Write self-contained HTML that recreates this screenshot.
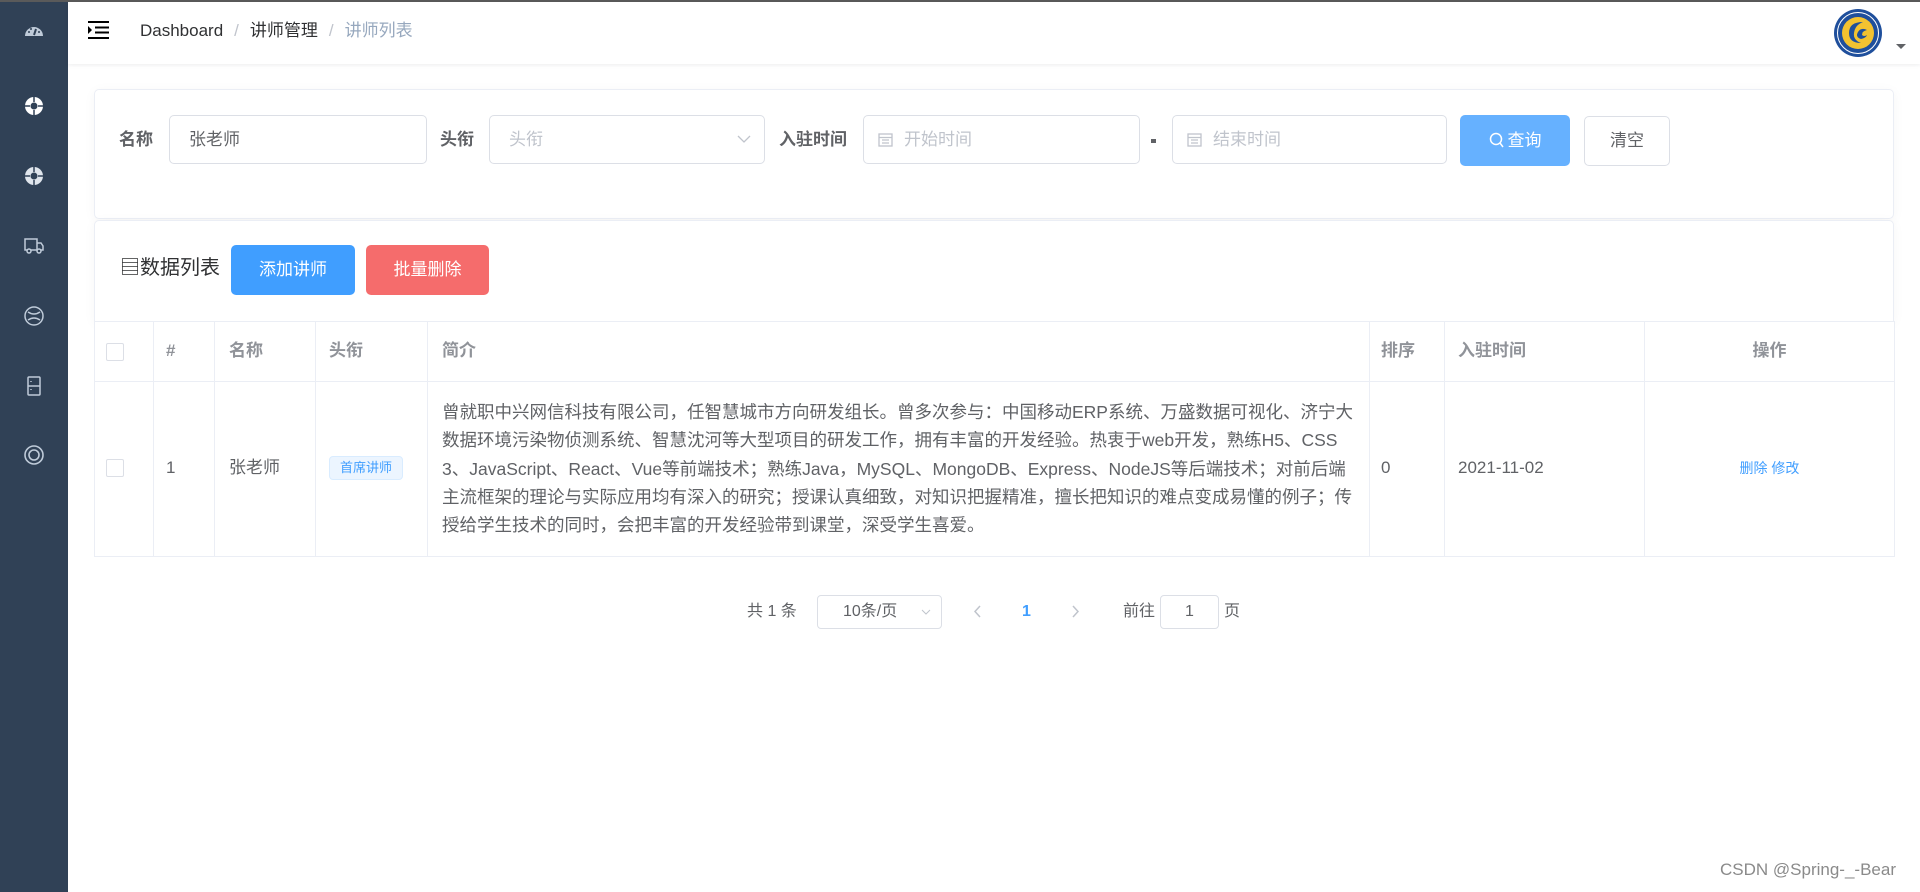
<!DOCTYPE html>
<html><head><meta charset="utf-8"><style>
*{box-sizing:border-box;margin:0;padding:0}
body{width:1920px;height:892px;overflow:hidden;background:#fff;font-family:"Liberation Sans","Noto Sans CJK SC",sans-serif;color:#606266;position:relative}
.abs{position:absolute}
#side{left:0;top:0;width:68px;height:892px;background:#304156}
#topline{left:0;top:0;width:1920px;height:2px;background:#5a5a5a}
#hdr{left:68px;top:2px;width:1852px;height:62px;background:#fff;box-shadow:0 1px 4px rgba(0,21,41,.08)}
.card{border:1px solid #ebeef5;border-radius:5px;background:#fff;box-shadow:0 2px 12px rgba(0,0,0,.04)}
.lbl{font-size:17px;font-weight:bold;color:#606266;line-height:20px}
.inp{border:1px solid #dcdfe6;border-radius:5px;height:49px;font-size:17px;line-height:47px;color:#c0c4cc;background:#fff}
.btn{border-radius:5px;font-size:17px;color:#fff;text-align:center}
.th{font-size:17px;font-weight:bold;color:#909399;line-height:20px}
.vl{top:321px;width:1px;height:235px;background:#ebeef5}
.cb{width:18px;height:18px;border:1px solid #dcdfe6;border-radius:2px;background:#fff}
.ic{left:22px;width:24px;height:24px}
</style></head><body>
<div id="side" class="abs">
<svg class="abs ic" style="top:19px" viewBox="0 0 24 24"><path d="M3 17a9 9 0 0 1 18 0z" fill="#bfcbd9"/><path d="M12 16l2-6" stroke="#304156" stroke-width="2"/><circle cx="7" cy="13" r="1" fill="#304156"/><circle cx="9" cy="10" r="1" fill="#304156"/><circle cx="17" cy="13" r="1" fill="#304156"/></svg>
<svg class="abs ic" style="top:94px" viewBox="0 0 24 24"><circle cx="12" cy="12" r="9" fill="#fff"/><circle cx="12" cy="12" r="3.5" fill="#304156"/><path d="M12 3v5M12 16v5M3 12h5M16 12h5" stroke="#304156" stroke-width="1.5"/></svg>
<svg class="abs ic" style="top:164px" viewBox="0 0 24 24"><circle cx="12" cy="12" r="9" fill="#dfe5ec"/><circle cx="12" cy="12" r="3.5" fill="#304156"/><path d="M12 3v5M12 16v5M3 12h5M16 12h5" stroke="#304156" stroke-width="1.5"/></svg>
<svg class="abs ic" style="top:234px" viewBox="0 0 24 24" fill="none" stroke="#bfcbd9" stroke-width="1.5"><path d="M3 5h12v11H3zM15 9h4l2 3v4h-6"/><circle cx="7" cy="17" r="2" fill="#304156"/><circle cx="17" cy="17" r="2" fill="#304156"/></svg>
<svg class="abs ic" style="top:304px" viewBox="0 0 24 24" fill="none" stroke="#bfcbd9" stroke-width="1.5"><circle cx="12" cy="12" r="9"/><path d="M6 8q6 4 12 0M6 16q6-4 12 0"/></svg>
<svg class="abs ic" style="top:374px" viewBox="0 0 24 24" fill="none" stroke="#bfcbd9" stroke-width="1.5"><rect x="6" y="3" width="12" height="18" rx="1"/><path d="M6 12h12M9 7v1M9 15v1"/></svg>
<svg class="abs ic" style="top:443px" viewBox="0 0 24 24" fill="none" stroke="#bfcbd9" stroke-width="1.6"><circle cx="12" cy="12" r="9"/><circle cx="12" cy="12" r="5"/></svg>
</div>
<div id="topline" class="abs"></div>
<div id="hdr" class="abs"></div>
<svg class="abs" style="left:88px;top:21px" width="21" height="18" viewBox="0 0 21 18"><path d="M0 1h21M7 6.5h14M7 11.5h14M0 17h21" stroke="#000" stroke-width="2"/><path d="M0 5l4 4-4 4z" fill="#000"/></svg>
<div class="abs" style="left:140px;top:21px;font-size:17px;line-height:20px;white-space:nowrap"><span style="color:#303133">Dashboard</span><span style="color:#c0c4cc;margin:0 11px">/</span><span style="color:#303133">讲师管理</span><span style="color:#c0c4cc;margin:0 11px">/</span><span style="color:#97a8be">讲师列表</span></div>
<svg class="abs" style="left:1833px;top:8px" width="50" height="50" viewBox="0 0 50 50"><circle cx="25" cy="25" r="24" fill="#1f4f9c"/><circle cx="25" cy="25" r="20.5" fill="none" stroke="#fff" stroke-width="1"/><circle cx="25" cy="25" r="16" fill="#f3c230"/><path d="M30 14q-14 0-14 11 0 10 12 10-8-3-7-10 1-8 9-11z" fill="#1f4f9c"/><path d="M34 22q-6-3-9 2t3 7q5-1 6-4-3 2-5 0 0-4 5-5z" fill="#1f4f9c"/></svg>
<div class="abs" style="left:1896px;top:44px;width:0;height:0;border-left:5px solid transparent;border-right:5px solid transparent;border-top:5px solid #606266"></div>

<div class="abs card" style="left:94px;top:89px;width:1800px;height:130px"></div>
<div class="abs lbl" style="left:119px;top:130px">名称</div>
<div class="abs inp" style="left:169px;top:115px;width:258px;padding-left:19px;color:#606266">张老师</div>
<div class="abs lbl" style="left:440px;top:130px">头衔</div>
<div class="abs inp" style="left:489px;top:115px;width:276px;padding-left:19px">头衔</div>
<svg class="abs" style="left:737px;top:135px" width="14" height="9" viewBox="0 0 14 9"><path d="M1 1l6 6 6-6" stroke="#c0c4cc" fill="none" stroke-width="1.3"/></svg>
<div class="abs lbl" style="left:779px;top:130px">入驻时间</div>
<div class="abs inp" style="left:863px;top:115px;width:277px;padding-left:40px">开始时间</div>
<svg class="abs" style="left:878px;top:132px" width="15" height="15" viewBox="0 0 15 15" fill="none" stroke="#c0c4cc" stroke-width="1.3"><rect x="1" y="2" width="13" height="12"/><path d="M1 5.5h13M4 8h7M4 11h7"/></svg>
<div class="abs" style="left:1151px;top:139px;width:5px;height:4px;background:#606266"></div>
<div class="abs inp" style="left:1172px;top:115px;width:275px;padding-left:40px">结束时间</div>
<svg class="abs" style="left:1187px;top:132px" width="15" height="15" viewBox="0 0 15 15" fill="none" stroke="#c0c4cc" stroke-width="1.3"><rect x="1" y="2" width="13" height="12"/><path d="M1 5.5h13M4 8h7M4 11h7"/></svg>
<div class="abs btn" style="left:1460px;top:115px;width:110px;height:51px;line-height:51px;background:#66b1ff"><svg width="15" height="16" viewBox="0 0 15 16" style="vertical-align:-2px;margin-right:4px"><circle cx="7" cy="7" r="5.5" fill="none" stroke="#fff" stroke-width="1.5"/><path d="M11 11l3 4" stroke="#fff" stroke-width="1.5"/></svg>查询</div>
<div class="abs btn" style="left:1584px;top:116px;width:86px;height:50px;line-height:48px;border:1px solid #dcdfe6;color:#606266;background:#fff">清空</div>

<div class="abs card" style="left:94px;top:220px;width:1800px;height:102px;border-radius:5px 5px 0 0"></div>
<div class="abs" style="left:120px;top:257px;font-size:20px;color:#303133;line-height:22px">&#9636;数据列表</div>
<div class="abs btn" style="left:231px;top:245px;width:124px;height:50px;line-height:50px;background:#409eff">添加讲师</div>
<div class="abs btn" style="left:366px;top:245px;width:123px;height:50px;line-height:50px;background:#f56c6c">批量删除</div>

<div class="abs" style="left:94px;top:321px;width:1801px;height:236px;border:1px solid #ebeef5;background:#fff"></div>
<div class="abs" style="left:94px;top:381px;width:1801px;height:1px;background:#ebeef5"></div>
<div class="abs vl" style="left:153px"></div><div class="abs vl" style="left:214px"></div><div class="abs vl" style="left:315px"></div><div class="abs vl" style="left:427px"></div><div class="abs vl" style="left:1369px"></div><div class="abs vl" style="left:1444px"></div><div class="abs vl" style="left:1644px"></div>
<div class="abs cb" style="left:106px;top:343px"></div>
<div class="abs th" style="left:166px;top:341px">#</div>
<div class="abs th" style="left:229px;top:341px">名称</div>
<div class="abs th" style="left:329px;top:341px">头衔</div>
<div class="abs th" style="left:442px;top:341px">简介</div>
<div class="abs th" style="left:1381px;top:341px">排序</div>
<div class="abs th" style="left:1458px;top:341px">入驻时间</div>
<div class="abs th" style="left:1644px;top:341px;width:251px;text-align:center">操作</div>
<div class="abs cb" style="left:106px;top:459px"></div>
<div class="abs" style="left:166px;top:458px;font-size:17px;line-height:20px">1</div>
<div class="abs" style="left:229px;top:458px;font-size:17px;line-height:20px">张老师</div>
<div class="abs" style="left:329px;top:456px;width:74px;height:24px;border:1px solid #d9ecff;background:#ecf5ff;border-radius:4px;color:#409eff;font-size:13px;line-height:22px;text-align:center">首席讲师</div>
<div class="abs" style="left:442px;top:398px;font-size:17.5px;line-height:28.3px;white-space:nowrap;color:#606266">曾就职中兴网信科技有限公司，任智慧城市方向研发组长。曾多次参与：中国移动ERP系统、万盛数据可视化、济宁大<br>数据环境污染物侦测系统、智慧沈河等大型项目的研发工作，拥有丰富的开发经验。热衷于web开发，熟练H5、CSS<br>3、JavaScript、React、Vue等前端技术；熟练Java，MySQL、MongoDB、Express、NodeJS等后端技术；对前后端<br>主流框架的理论与实际应用均有深入的研究；授课认真细致，对知识把握精准，擅长把知识的难点变成易懂的例子；传<br>授给学生技术的同时，会把丰富的开发经验带到课堂，深受学生喜爱。</div>
<div class="abs" style="left:1381px;top:458px;font-size:17px;line-height:20px">0</div>
<div class="abs" style="left:1458px;top:458px;font-size:17px;line-height:20px">2021-11-02</div>
<div class="abs" style="left:1644px;top:460px;width:251px;text-align:center;font-size:14px;color:#409eff;line-height:16px">删除 修改</div>

<div class="abs" style="left:747px;top:603px;font-size:16px;line-height:18px">共 1 条</div>
<div class="abs" style="left:817px;top:595px;width:125px;height:34px;border:1px solid #dcdfe6;border-radius:4px;font-size:16px;line-height:32px;padding-left:25px">10条/页</div>
<svg class="abs" style="left:921px;top:609px" width="10" height="6" viewBox="0 0 10 6"><path d="M1 1l4 4 4-4" stroke="#c0c4cc" fill="none"/></svg>
<svg class="abs" style="left:974px;top:605px" width="8" height="13" viewBox="0 0 8 13"><path d="M6 1L1 6.5 6 12" stroke="#c0c4cc" fill="none" stroke-width="1.5"/></svg>
<div class="abs" style="left:1022px;top:603px;font-size:16px;line-height:18px;color:#409eff;font-weight:bold">1</div>
<svg class="abs" style="left:1071px;top:605px" width="8" height="13" viewBox="0 0 8 13"><path d="M2 1l5 5.5L2 12" stroke="#c0c4cc" fill="none" stroke-width="1.5"/></svg>
<div class="abs" style="left:1123px;top:603px;font-size:16px;line-height:18px">前往</div>
<div class="abs" style="left:1160px;top:595px;width:59px;height:34px;border:1px solid #dcdfe6;border-radius:4px;font-size:16px;line-height:32px;text-align:center">1</div>
<div class="abs" style="left:1224px;top:603px;font-size:16px;line-height:18px">页</div>
<div class="abs" style="left:1720px;top:860px;font-size:17px;line-height:20px;color:#8a8a8a;text-shadow:0 0 1px #fff;white-space:nowrap">CSDN @Spring-_-Bear</div>
</body></html>
